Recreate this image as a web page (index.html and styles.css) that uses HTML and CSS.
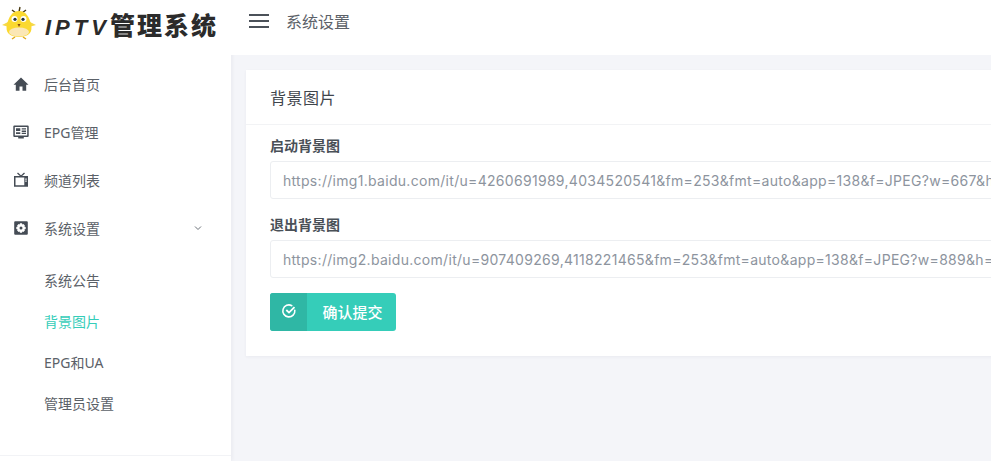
FILE: index.html
```html
<!DOCTYPE html>
<html lang="zh-CN">
<head>
<meta charset="utf-8">
<title>系统设置</title>
<link rel="stylesheet" href="styles.css">
</head>
<body>
<div class="app">
  <aside class="sidebar">
    <div class="brand">
      <svg class="logo" viewBox="0 0 36 36" width="36" height="36" aria-hidden="true">
        <path d="M15 9 11 6M18 8l1-5M21 9l4-3" stroke="#4a3a10" stroke-width="1.400" fill="none"/>
        <path d="M1 21l6-3 1 5zM35 21l-6-3-1 5z" fill="#f5d84a"/>
        <path d="M18 7c7 0 10 6 12 13 2 8-2 13-12 13S4 28 6 20C8 13 11 7 18 7z" fill="#fbd92f"/>
        <ellipse cx="18" cy="28" rx="10" ry="4.500" fill="#fbe7b5"/>
        <circle cx="13.500" cy="15" r="3" fill="#fff"/><circle cx="22.500" cy="15" r="3" fill="#fff"/>
        <circle cx="14" cy="15.300" r="1.600" fill="#263238"/><circle cx="22" cy="15.300" r="1.600" fill="#263238"/>
        <path d="M16.500 20h3l-1.500 3z" fill="#8a4d12"/>
        <path d="M11 35l3-2M25 35l-3-2" stroke="#e0a91e" stroke-width="1.500"/>
      </svg>
      <span class="brand-name"><i>IPTV</i>管理系统</span>
    </div>
    <nav class="menu">
      <a class="menu-item">
        <svg class="ico" viewBox="0 0 16 16"><path d="M8 1.500.5 8.700h2.300V14.800h3.700v-4.300h3v4.300h3.700V8.700h2.300z" fill="#454c55"/></svg>
        <span>后台首页</span>
      </a>
      <a class="menu-item">
        <svg class="ico" viewBox="0 0 16 16"><path fill-rule="evenodd" d="M1.300 1.500h13.400a1 1 0 0 1 1 1v9.500a1 1 0 0 1-1 1H10.800v1.500H5.200V13H1.300a1 1 0 0 1-1-1V2.500a1 1 0 0 1 1-1zM1.800 3v8.500h12.400V3z" fill="#454c55"/><path d="M3 4.300h4.300V7H3zM8.700 4.300H13v1.300H8.700zM8.700 6.600H13v1.300H8.700zM3 8.300h4.300v1.700H3zM8.700 8.800H13V10H8.700z" fill="#454c55"/></svg>
        <span>EPG管理</span>
      </a>
      <a class="menu-item">
        <svg class="ico" viewBox="0 0 16 16"><path d="M4.500 1 8 4.200 11.500 1" fill="none" stroke="#454c55" stroke-width="1.300"/><path fill-rule="evenodd" d="M1 4h14v10.800H1zM2.500 5.500v7.800h8.800V5.500z" fill="#454c55"/><path d="M12.300 6.500h1.400v1.200h-1.400zM12.300 8.500h1.400v1.200h-1.400z" fill="#fff"/></svg>
        <span>频道列表</span>
      </a>
      <a class="menu-item">
        <svg class="ico" viewBox="0 0 16 16"><path fill-rule="evenodd" d="M2.200 1.200h11.600a1 1 0 0 1 1 1v11.600a1 1 0 0 1-1 1H2.200a1 1 0 0 1-1-1V2.200a1 1 0 0 1 1-1zM7 3.300l-.4 1.300-1-.5-1.500 1.500.5 1-1.300.4v2l1.300.4-.5 1 1.500 1.500 1-.5.4 1.300h2l.4-1.300 1 .5 1.500-1.500-.5-1 1.300-.4V7l-1.300-.4.5-1-1.500-1.500-1 .5L9 3.300zM8 6.500a1.500 1.500 0 1 1 0 3 1.500 1.500 0 0 1 0-3z" fill="#454c55"/></svg>
        <span>系统设置</span>
        <svg class="chevron" viewBox="0 0 8 6"><path d="M1 1.500 4 4.500 7 1.500" fill="none" stroke="#6b7178" stroke-width="1"/></svg>
      </a>
      <div class="submenu">
        <a class="sub-item">系统公告</a>
        <a class="sub-item active">背景图片</a>
        <a class="sub-item">EPG和UA</a>
        <a class="sub-item">管理员设置</a>
      </div>
    </nav>
  </aside>
  <div class="main">
    <header class="topbar">
      <span class="burger"><b></b><b></b><b></b></span>
      <span class="crumb">系统设置</span>
    </header>
    <section class="card">
      <h2 class="card-title">背景图片</h2>
      <form class="card-body">
        <div class="field">
          <label class="field-label">启动背景图</label>
          <input class="field-input" type="text" value="https://img1.baidu.com/it/u=4260691989,4034520541&amp;fm=253&amp;fmt=auto&amp;app=138&amp;f=JPEG?w=667&amp;h=500">
        </div>
        <div class="field">
          <label class="field-label">退出背景图</label>
          <input class="field-input" type="text" value="https://img2.baidu.com/it/u=907409269,4118221465&amp;fm=253&amp;fmt=auto&amp;app=138&amp;f=JPEG?w=889&amp;h=500">
        </div>
        <button class="submit" type="button">
          <span class="submit-icon">
            <svg viewBox="0 0 16 16" width="16" height="16"><path d="M13.800 7.200A6 6 0 1 1 10.800 2.700" fill="none" stroke="#fff" stroke-width="1.600" stroke-linecap="round"/><path d="M5.300 7 8 9.600 13.500 4.200" fill="none" stroke="#fff" stroke-width="1.800"/></svg>
          </span>
          <span class="submit-text">确认提交</span>
        </button>
      </form>
    </section>
  </div>
</div>
</body>
</html>
```
FILE: styles.css
```css
* { box-sizing: border-box; }
html, body { margin: 0; height: 100%; overflow: hidden; }
body {
  font-family: "Noto Sans", "Noto Sans CJK SC", sans-serif;
  font-size: 14px;
  color: #495057;
  background: #f4f5f9;
}
.app { display: flex; height: 461px; }
.sidebar {
  width: 231px;
  flex: none;
  background: #fff;
  box-shadow: 1px 0 4px rgba(30, 40, 70, .06);
}
.sidebar::after {
  content: "";
  display: block;
  height: 1px;
  margin-top: 32px;
  background: #f2f3f6;
}
.brand { height: 46px; display: flex; align-items: center; padding-left: 1px; }
.logo { flex: none; margin-bottom: 3px; }
.brand-name {
  margin: 2px 0 0 8px;
  font-family: "Noto Sans CJK SC", sans-serif;
  font-weight: 900;
  font-size: 25px;
  letter-spacing: 2px;
  color: #2b2b2b;
  white-space: nowrap;
}
.brand-name i {
  font-family: "Liberation Sans", sans-serif;
  font-weight: 700;
  letter-spacing: 4px;
  font-size: 22px;
}
.menu { padding-top: 14px; }
.menu-item {
  display: flex;
  align-items: center;
  height: 48px;
  padding-left: 13px;
  color: #5b6168;
  font-size: 14px;
}
.ico { width: 16px; height: 16px; flex: none; margin-right: 15px; }
.chevron { width: 8px; height: 6px; margin-left: 94px; }
.submenu { padding-top: 7px; }
.sub-item {
  display: flex;
  align-items: center;
  height: 41px;
  padding-left: 44px;
  color: #5b6168;
  font-size: 14px;
}
.sub-item.active { color: #35cdb9; }
.main { flex: 1; min-width: 0; overflow: hidden; }
.topbar {
  height: 55px;
  background: #fff;
  display: flex;
  align-items: center;
  padding-left: 18px;
  padding-bottom: 14px;
  margin-bottom: 15px;
}
.burger { display: flex; flex-direction: column; gap: 4px; width: 20px; }
.burger b { display: block; height: 2px; background: #4b5159; }
.crumb { margin-left: 17px; font-size: 16px; color: #5b6168; }
.card {
  width: 1000px;
  margin-left: 15px;
  background: #fff;
  box-shadow: 0 1px 3px rgba(30, 40, 70, .05);
}
.card-title {
  margin: 0;
  height: 55px;
  padding: 0 24px 1px;
  display: flex;
  align-items: center;
  font-size: 16px;
  letter-spacing: .5px;
  font-weight: 400;
  color: #3f454c;
  border-bottom: 1px solid #f2f3f5;
}
.card-body { padding: 10px 24px 25px; }
.field { margin-bottom: 15px; }
.field-label {
  display: block;
  font-size: 14px;
  font-weight: 700;
  color: #495057;
  line-height: 22px;
  margin-bottom: 4px;
}
.field-input {
  display: block;
  width: 100%;
  height: 38px;
  padding: 0 12px;
  border: 1px solid #eceef1;
  border-radius: 3px;
  background: #fff;
  font: 14px "Inter", "Noto Sans CJK SC", sans-serif;
  letter-spacing: .3px;
  color: #8d949e;
  outline: none;
}
.submit {
  display: flex;
  align-items: stretch;
  width: 126px;
  height: 38px;
  padding: 0;
  border: 0;
  border-radius: 3px;
  overflow: hidden;
  background: #35cdb9;
  color: #fff;
  font: 500 15px "Noto Sans CJK SC", sans-serif;
}
.submit-icon { width: 37px; background: #2fb7a5; display: flex; align-items: center; justify-content: center; padding-bottom: 3px; }
.submit-text { flex: 1; display: flex; align-items: center; justify-content: center; padding: 0 0 2px 2px; }
```
